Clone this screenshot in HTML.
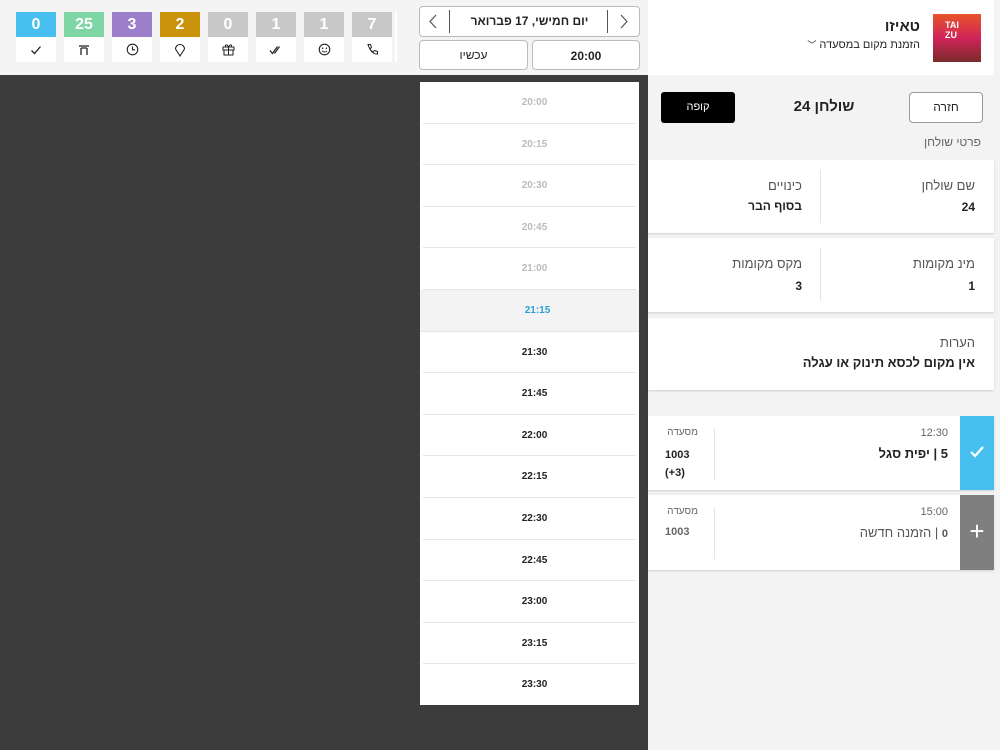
<!DOCTYPE html>
<html dir="ltr"><head><meta charset="utf-8"><style>
*{box-sizing:border-box;margin:0;padding:0}
body{width:1000px;height:750px;overflow:hidden;background:#3c3c3c;font-family:"Liberation Sans","Noto Sans CJK SC",sans-serif;position:relative;color:#222}
.abs{position:absolute}
.top{left:0;top:0;width:648px;height:75px;background:#f4f4f4}
.cnt{top:12px;width:40px;height:50px;background:#fff}
.cnt .n{height:25px;color:#fff;font-size:16px;font-weight:bold;text-align:center;line-height:25px}
.cnt .i{height:25px;display:flex;align-items:center;justify-content:center}
.btn{background:#fff;border:1px solid #bbb;border-radius:4px;font-size:12px;font-weight:bold;text-align:center;direction:rtl}
.list{left:420px;top:82px;width:219px;height:623px;background:#fff}
.row{height:41.6px;line-height:41.6px;text-align:center;font-size:10px;font-weight:bold;border-bottom:1px solid #e6e6e6;margin:0 3px;color:#222;padding-left:10px}
.right{left:648px;top:0;width:352px;height:750px;background:#f3f3f3}
.card{background:#fff;position:absolute;left:0;width:346px;box-shadow:0 1px 2px rgba(0,0,0,.15);direction:rtl}
.lbl{color:#555;font-size:13px}
.val{font-size:12px;font-weight:bold;color:#222}
</style></head><body>
<div class="abs top"></div>
<div class="abs cnt" style="left:16px"><div class="n" style="background:#47bfef">0</div><div class="i"><svg width="12" height="12" viewBox="0 0 12 12"><path d="M1.5 6.5l3 3 6-7" fill="none" stroke="#222" stroke-width="1.3"/></svg></div></div>
<div class="abs cnt" style="left:64px"><div class="n" style="background:#7fd6a5">25</div><div class="i"><svg width="12" height="12" viewBox="0 0 12 12"><path d="M1 2h10M3 4v7M9 4v7M3 4h6" fill="none" stroke="#222" stroke-width="1.3"/></svg></div></div>
<div class="abs cnt" style="left:112px"><div class="n" style="background:#9b7fcb">3</div><div class="i"><svg width="13" height="13" viewBox="0 0 13 13"><circle cx="6.5" cy="6.5" r="5.3" fill="none" stroke="#222" stroke-width="1.1"/><path d="M6.5 3.5v3.3h2.5" fill="none" stroke="#222" stroke-width="1.1"/></svg></div></div>
<div class="abs cnt" style="left:160px"><div class="n" style="background:#c9920a">2</div><div class="i"><svg width="12" height="14" viewBox="0 0 12 14"><path d="M6 13L1.5 6A4.5 4.5 0 1 1 10.5 6Z" fill="none" stroke="#222" stroke-width="1.1"/></svg></div></div>
<div class="abs cnt" style="left:208px"><div class="n" style="background:#c8c8c8">0</div><div class="i"><svg width="13" height="13" viewBox="0 0 13 13"><path d="M1 4h11v3H1zM2 7h9v5H2zM6.5 4v8M6.5 4C5 1 3 1.5 3.5 3.5M6.5 4C8 1 10 1.5 9.5 3.5" fill="none" stroke="#222" stroke-width="1"/></svg></div></div>
<div class="abs cnt" style="left:256px"><div class="n" style="background:#c8c8c8">1</div><div class="i"><svg width="14" height="12" viewBox="0 0 14 12"><path d="M1 6.5l2.5 3 5-7M5.5 9.5l5-7" fill="none" stroke="#222" stroke-width="1.2"/></svg></div></div>
<div class="abs cnt" style="left:304px"><div class="n" style="background:#c8c8c8">1</div><div class="i"><svg width="13" height="13" viewBox="0 0 13 13"><circle cx="6.5" cy="6.5" r="5.3" fill="none" stroke="#222" stroke-width="1.1"/><circle cx="4.6" cy="5.2" r=".7"/><circle cx="8.4" cy="5.2" r=".7"/><path d="M4 7.8q2.5 2.5 5 0" fill="none" stroke="#222" stroke-width="1"/></svg></div></div>
<div class="abs cnt" style="left:352px"><div class="n" style="background:#c8c8c8">7</div><div class="i"><svg width="13" height="13" viewBox="0 0 13 13"><path d="M2 1.5l2.5 0 1 3-1.5 1.2q1.2 2.5 3.3 3.3l1.2-1.5 3 1v2.5q-6 .8-9.5-9.5z" fill="none" stroke="#222" stroke-width="1"/></svg></div></div>
<div class="abs" style="left:395px;top:12px;width:2px;height:50px;background:#fff"></div>
<div class="abs btn" style="left:419px;top:6px;width:221px;height:31px;line-height:29px">יום חמישי, 17 פברואר</div>
<div class="abs" style="left:449px;top:10px;width:1px;height:23px;background:#555"></div>
<div class="abs" style="left:607px;top:10px;width:1px;height:23px;background:#555"></div>
<svg class="abs" style="left:428px;top:14px" width="10" height="15" viewBox="0 0 10 15"><path d="M8 1L2 7.5 8 14" fill="none" stroke="#555" stroke-width="1.2"/></svg>
<svg class="abs" style="left:619px;top:14px" width="10" height="15" viewBox="0 0 10 15"><path d="M2 1l6 6.5L2 14" fill="none" stroke="#555" stroke-width="1.2"/></svg>
<div class="abs btn" style="left:419px;top:40px;width:109px;height:30px;line-height:28px;font-weight:normal">עכשיו</div>
<div class="abs btn" style="left:532px;top:40px;width:108px;height:30px;line-height:30px">20:00</div>
<div class="abs list">
<div class="row" style="color:#bbb">20:00</div>
<div class="row" style="color:#bbb">20:15</div>
<div class="row" style="color:#bbb">20:30</div>
<div class="row" style="color:#bbb">20:45</div>
<div class="row" style="color:#bbb">21:00</div>
<div class="row" style="color:#2a9fd6;background:#f3f3f3;margin:0;padding-left:16px">21:15</div>
<div class="row">21:30</div><div class="row">21:45</div><div class="row">22:00</div><div class="row">22:15</div><div class="row">22:30</div><div class="row">22:45</div><div class="row">23:00</div><div class="row">23:15</div><div class="row" style="border:0">23:30</div>
</div>
<div class="abs right">
<div class="abs" style="left:0;top:0;width:346px;height:75px;background:#fff"></div>
<div class="abs" style="left:285px;top:14px;width:48px;height:48px;background:linear-gradient(180deg,#e8542a,#d0245a 50%,#7a2a2a);color:#fff;font-size:9px;line-height:10px;padding:6px 0 0 12px;font-weight:bold">TAI<br>ZU</div>
<div class="abs" style="right:80px;top:18px;font-size:15px;font-weight:bold;direction:rtl">טאיזו</div>
<div class="abs" style="right:80px;top:38px;font-size:11px;direction:rtl">הזמנת מקום במסעדה <span style="font-size:9px">﹀</span></div>
<div class="abs btn" style="left:261px;top:92px;width:74px;height:31px;line-height:29px;border-color:#999;font-weight:normal">חזרה</div>
<div class="abs" style="left:13px;top:92px;width:74px;height:31px;background:#000;color:#fff;border-radius:3px;font-size:11px;text-align:center;line-height:31px">קופה</div>
<div class="abs" style="left:0;width:352px;top:98px;text-align:center;font-size:15px;font-weight:bold;direction:rtl">שולחן 24</div>
<div class="abs" style="right:19px;top:135px;font-size:12px;color:#666;direction:rtl">פרטי שולחן</div>
<div class="card" style="top:160px;height:73px">
<div class="abs" style="left:172px;top:10px;width:1px;height:53px;background:#e4e4e4"></div>
<div class="abs lbl" style="right:19px;top:18px">שם שולחן</div><div class="abs val" style="right:19px;top:40px">24</div>
<div class="abs lbl" style="right:192px;top:18px">כינויים</div><div class="abs val" style="right:192px;top:39px">בסוף הבר</div>
</div>
<div class="card" style="top:238px;height:74px">
<div class="abs" style="left:172px;top:10px;width:1px;height:53px;background:#e4e4e4"></div>
<div class="abs lbl" style="right:19px;top:18px">מינ מקומות</div><div class="abs val" style="right:19px;top:41px">1</div>
<div class="abs lbl" style="right:192px;top:18px">מקס מקומות</div><div class="abs val" style="right:192px;top:41px">3</div>
</div>
<div class="card" style="top:318px;height:72px">
<div class="abs lbl" style="right:19px;top:17px">הערות</div><div class="abs" style="right:19px;top:37px;font-size:13px;font-weight:bold">אין מקום לכסא תינוק או עגלה</div>
</div>
<div class="card" style="top:416px;height:74px">
<div class="abs" style="right:0;top:0;width:34px;height:74px;background:#47bfef"><svg style="position:absolute;left:9px;top:29px" width="16" height="14" viewBox="0 0 16 14"><path d="M2 7l4 4 8-9" fill="none" stroke="#fff" stroke-width="2.2"/></svg></div>
<div class="abs" style="left:66px;top:12px;width:1px;height:52px;background:#e6e6e6"></div>
<div class="abs" style="right:46px;top:11px;font-size:11px;color:#666">12:30</div>
<div class="abs" style="right:46px;top:30px;font-size:13px;font-weight:bold">5 | יפית סגל</div>
<div class="abs" style="right:296px;top:11px;font-size:10px;color:#666">מסעדה</div>
<div class="abs" style="left:17px;top:30px;font-size:11px;font-weight:bold;direction:ltr;line-height:18px;text-align:left"><div dir="ltr">1003</div><div dir="ltr">(+3)</div></div>
</div>
<div class="card" style="top:495px;height:75px">
<div class="abs" style="right:0;top:0;width:34px;height:75px;background:#7f7f7f;color:#fff;font-size:26px;text-align:center;line-height:72px">+</div>
<div class="abs" style="left:66px;top:12px;width:1px;height:52px;background:#e6e6e6"></div>
<div class="abs" style="right:46px;top:11px;font-size:11px;color:#666">15:00</div>
<div class="abs" style="right:46px;top:30px;font-size:13px;color:#555"><b style="font-size:11px">0</b> | הזמנה חדשה</div>
<div class="abs" style="right:296px;top:11px;font-size:10px;color:#666">מסעדה</div>
<div class="abs" style="left:17px;top:31px;font-size:11px;font-weight:bold;color:#666">1003</div>
</div>
</div>
</body></html>
